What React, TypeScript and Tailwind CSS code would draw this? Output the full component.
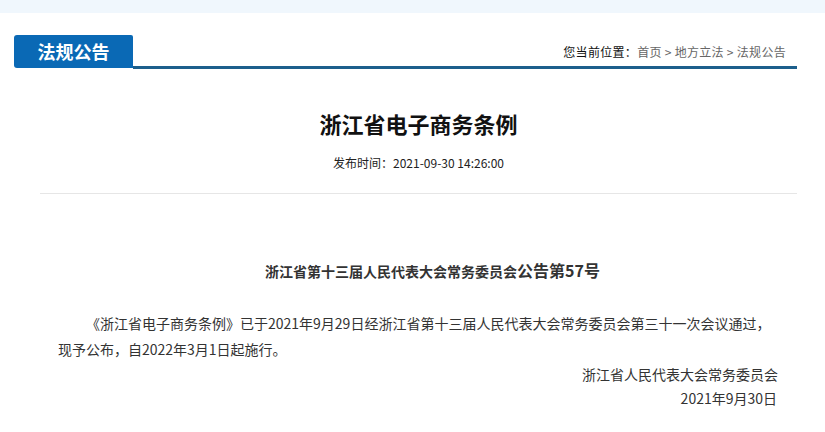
export default function App() {
  return (
    <div className="min-h-screen w-full bg-white font-['Noto_Sans_CJK_SC',sans-serif] text-[#333]">
      {/* top band */}
      <div className="h-[13px] w-full bg-[#f0f7fd]"></div>

      <div className="ml-[14px] w-[783px]">
        {/* column header */}
        <div className="mt-[22px] flex h-[34px] items-start">
          <div className="flex h-[33px] w-[119px] items-center justify-center rounded-l-[3px] rounded-tr-[2px] bg-[#0a69b5] text-[18px] font-bold text-white">
            法规公告
          </div>
          <div className="flex h-full flex-1 items-center justify-end border-b-[3px] border-[#1c5f8c] pt-[3px] pr-[11px] text-[12px] tracking-[0.3px]">
            <span className="text-[#111]">您当前位置：</span>
            <span className="text-[#666]">首页 &gt; 地方立法 &gt; 法规公告</span>
          </div>
        </div>

        <div className="ml-[26px]">
          {/* title */}
          <h1 className="mt-[38px] text-center text-[22px] font-bold leading-[32px] text-[#111]">
            浙江省电子商务条例
          </h1>
          <div className="mt-[14px] text-center text-[12px] leading-[20px] text-[#222]">
            发布时间：2021-09-30 14:26:00
          </div>
          <div className="mt-[20px] h-px bg-[#e6e6e6]"></div>

          {/* body */}
          <div className="mt-[64px] pl-[28px] text-center leading-[24px] font-bold text-[#333]">
            <span className="text-[14px]">浙江省第十三届人民代表大会常务委员会</span>
            <span className="text-[16px]">公告第57号</span>
          </div>
          <p className="mt-[27px] pr-0 pl-[18px] indent-[28px] text-[14px] leading-[26px] whitespace-nowrap">
            《浙江省电子商务条例》已于2021年9月29日经浙江省第十三届人民代表大会常务委员会第三十一次会议通过，
            <br />
            现予公布，自2022年3月1日起施行。
          </p>
          <div className="pr-[19px] text-right text-[14px] leading-[24px]">
            <div>浙江省人民代表大会常务委员会</div>
            <div className="pr-[1px]">2021年9月30日</div>
          </div>
        </div>
      </div>
    </div>
  )
}
